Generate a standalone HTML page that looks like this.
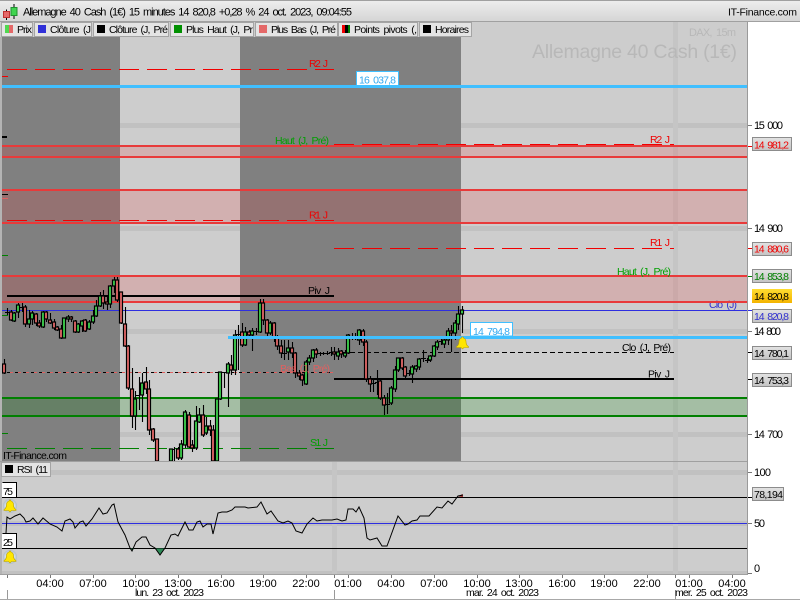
<!DOCTYPE html>
<html><head><meta charset="utf-8"><title>Allemagne 40 Cash</title>
<style>
html,body{margin:0;padding:0;background:#fff;width:800px;height:600px;overflow:hidden}
svg{display:block}
text{font-family:"Liberation Sans",sans-serif;font-size:10.5px;word-spacing:2px;fill:#000}
.m{text-anchor:middle;font-size:11px}
.g{fill:#3fd44f;stroke:#000;stroke-width:1.2}
.r{fill:#e46868;stroke:#000;stroke-width:1.2}
.w{fill:none;stroke:#000;stroke-width:1.1}
.tab{fill:#e4e4e4;stroke:#a4a4a4;stroke-width:1}
.box{fill:url(#lb);stroke:#8c8c8c;stroke-width:1}
</style></head><body>
<svg width="800" height="600" viewBox="0 0 800 600" xmlns="http://www.w3.org/2000/svg">
<defs>
<linearGradient id="tb" x1="0" y1="0" x2="0" y2="1"><stop offset="0" stop-color="#eeeeee"/><stop offset="1" stop-color="#d4d4d4"/></linearGradient>
<linearGradient id="lb" x1="0" y1="0" x2="0" y2="1"><stop offset="0" stop-color="#e2e2e2"/><stop offset="1" stop-color="#c4c4c4"/></linearGradient>
<linearGradient id="ye" x1="0" y1="0" x2="0" y2="1"><stop offset="0" stop-color="#ffdc30"/><stop offset="1" stop-color="#f4b400"/></linearGradient>
<radialGradient id="bl"><stop offset="0.5" stop-color="#e4ecf4"/><stop offset="1" stop-color="#aebcc8"/></radialGradient>
<clipPath id="cm"><rect x="2" y="37" width="746" height="424"/></clipPath>
<g id="bell"><path d="M-6 3.500 C-4 2.500 -3.500 0 -3.500 -1.500 C-3.500 -4 -1.500 -5 -.8 -5 L-.8 -6 L.8 -6 L.8 -5 C1.500 -5 3.500 -4 3.500 -1.500 C3.500 0 4 2.500 6 3.500 L6 4.500 L1.500 4.500 L0 6 L-1.500 4.500 L-6 4.500 Z" fill="#ffe600" stroke="#b8a000" stroke-width=".6"/></g>
</defs>

<!-- main backgrounds -->
<rect x="0" y="0" width="800" height="22" fill="url(#tb)"/>
<rect x="0" y="0" width="800" height="1" fill="#a0a0a0"/>
<rect x="0" y="21" width="800" height="1" fill="#a0a0a0"/>
<rect x="0" y="22" width="748" height="553" fill="#cdcdcd"/>
<rect x="0" y="22" width="2" height="553" fill="#b4b4b4"/>

<!-- grid bands -->
<g fill="#c1c1c1">
<rect x="2" y="123" width="746" height="5"/><rect x="2" y="226" width="746" height="5"/><rect x="2" y="329" width="746" height="5"/><rect x="2" y="432" width="746" height="5"/>
<rect x="2" y="470" width="746" height="5"/><rect x="2" y="521" width="746" height="5"/><rect x="2" y="571" width="746" height="3"/>
</g>
<g fill="#c5c5c5"><rect x="673" y="22" width="5" height="552"/><rect x="332" y="462" width="5" height="112"/></g>

<!-- watermark -->
<text x="689" y="36" style="font-size:11px;fill:#b8b8b8" textLength="47">DAX, 15m</text>
<text x="532" y="58" style="font-size:19.5px;fill:#b8b8b8;word-spacing:0" textLength="205">Allemagne 40 Cash (1€)</text>

<!-- dark sessions -->
<rect x="2" y="37" width="118" height="424" fill="#808080"/>
<rect x="240" y="37" width="221" height="424" fill="#808080"/>

<!-- labels under lines -->
<text x="709" y="308" style="fill:#3030d0" textLength="28">Clo (J)</text>

<!-- zones -->
<rect x="2" y="146" width="746" height="11" fill="#e83a3a" opacity=".2"/>
<rect x="2" y="190" width="746" height="33" fill="#e83a3a" opacity=".2"/>
<rect x="2" y="276" width="746" height="26" fill="#e83a3a" opacity=".2"/>
<rect x="2" y="398" width="746" height="18" fill="#008000" opacity=".2"/>
<g fill="#e83a3a">
<rect x="2" y="145" width="746" height="2"/><rect x="2" y="156" width="746" height="2"/><rect x="2" y="189" width="746" height="2"/><rect x="2" y="222" width="746" height="2"/><rect x="2" y="275" width="746" height="2"/><rect x="2" y="301" width="746" height="2"/>
</g>
<g fill="#008000"><rect x="2" y="397" width="746" height="2"/><rect x="2" y="415" width="746" height="2"/></g>
<rect x="2" y="310" width="746" height="1" fill="#2e2ee0"/>

<!-- dashed levels -->
<g fill="none" stroke-width="1">
<path d="M7 69.500H334M334 144.500H674M7 220.500H334M334 248.500H674" stroke="#f00000" stroke-dasharray="20 8"/>
<path d="M7 448.500H334" stroke="#008000" stroke-dasharray="20 8"/>
<path d="M7 372.500H334" stroke="#000" stroke-dasharray="3 5"/>
<path d="M10 372.500H334" stroke="#e06060" stroke-dasharray="3 5"/>
<path d="M334 352.500H674" stroke="#000" stroke-dasharray="5 3"/>
</g>
<rect x="7" y="295" width="327" height="2" fill="#000"/>
<rect x="334" y="378" width="340" height="2" fill="#000"/>

<!-- candles -->
<g clip-path="url(#cm)">
<path class="w" d="M4.500 359V374M7.500 308V315M11.500 310V321M14.500 312V322M18.500 303V318M22.500 303V312M25.500 305V327M29.500 310V328M32.500 311V325M36.500 313V326M39.500 320V328M43.500 311V328M46.500 311V322M50.500 313V324M54.500 319V330M57.500 326V331M61.500 325V339M64.500 318V338M68.500 315V322M71.500 316V322M75.500 320V333M78.500 323V333M82.500 320V332M85.500 319V332M89.500 320V330M93.500 310V324M96.500 300V317M100.500 292V307M103.500 290V309M107.500 296V310M110.500 285V308M114.500 277V293M117.500 277V302M121.500 292V324M125.500 307V347M128.500 345V390M132.500 368V428M135.500 391V430M139.500 377V410M142.500 373V422M146.500 367V394M149.500 380V435M153.500 428V442M157.500 439V461M171.500 449V461M174.500 447V461M178.500 447V460M181.500 440V460M185.500 410V448M189.500 412V448M192.500 440V452M196.500 406V450M199.500 408V423M203.500 405V437M206.500 417V435M210.500 420V436M213.500 425V461M217.500 399V461M220.500 372V400M224.500 372V388M228.500 362V407M231.500 355V375M235.500 330V375M238.500 325V370M242.500 323V347M245.500 327V346M249.500 330V338M252.500 328V351M256.500 328V335M260.500 299V333M263.500 299V325M267.500 319V338M270.500 321V335M274.500 322V342M277.500 335V350M281.500 340V358M284.500 340V360M288.500 340V360M292.500 342V358M295.500 352V378M299.500 370V380M302.500 372V386M306.500 360V385M309.500 355V365M313.500 349V362M316.500 348V358M320.500 352V356M323.500 352V355M327.500 351V355M331.500 347V356M334.500 347V360M338.500 348V360M341.500 350V358M345.500 350V358M348.500 334V354M352.500 333V340M355.500 333V340M359.500 329V345M363.500 329V346M366.500 340V382M370.500 376V392M373.500 380V392M377.500 370V395M380.500 378V400M384.500 395V415M387.500 393V414M391.500 386V405M395.500 366V392M398.500 358V372M402.500 357V370M405.500 366V378M409.500 370V376M412.500 365V383M416.500 365V372M419.500 358V370M423.500 350V362M427.500 358V363M430.500 355V362M434.500 345V357M437.500 340V350M441.500 336V345M444.500 338V348M448.500 328V345M451.500 325V352M455.500 320V340M458.500 306V330M462.500 306V333"/>
<path class="w" style="stroke-width:1" d="M5 312.500h5M20 307.500h5M135 395.500h5M170 449.500h5M222 372.500h5M236 334.500h5M254 331.500h5M282 353.500h5M318 353.500h5M321 353.500h5M325 353.500h5M329 352.500h5M350 336.500h5M353 336.500h5M371 383.500h5M375 382.500h5M385 404.500h5M407 373.500h5M421 358.500h5M425 360.500h5M439 341.500h5"/>
<path class="g" d="M12.500 313h3V321h-3zM16.500 305h3V312h-3zM27.500 319h3V324h-3zM30.500 313h3V319h-3zM41.500 312h3V327h-3zM62.500 318h3V338h-3zM66.500 317h3V319h-3zM76.500 324h3V332h-3zM80.500 321h3V326h-3zM87.500 322h3V329h-3zM91.500 316h3V322h-3zM94.500 306h3V316h-3zM98.500 296h3V306h-3zM108.500 286h3V304h-3zM112.500 280h3V286h-3zM133.500 399h3V416h-3zM140.500 383h3V395h-3zM169.500 449h3V461h-3zM179.500 444h3V458h-3zM183.500 412h3V445h-3zM194.500 421h3V448h-3zM197.500 415h3V422h-3zM204.500 426h3V433h-3zM215.500 399h3V461h-3zM218.500 372h3V399h-3zM226.500 364h3V373h-3zM233.500 335h3V370h-3zM243.500 332h3V345h-3zM250.500 331h3V335h-3zM258.500 303h3V332h-3zM268.500 323h3V333h-3zM286.500 348h3V352h-3zM304.500 362h3V384h-3zM307.500 358h3V362h-3zM311.500 350h3V358h-3zM336.500 352h3V356h-3zM343.500 353h3V356h-3zM346.500 335h3V353h-3zM357.500 330h3V340h-3zM389.500 388h3V403h-3zM393.500 370h3V389h-3zM396.500 358h3V370h-3zM410.500 367h3V374h-3zM414.500 366h3V369h-3zM417.500 359h3V367h-3zM428.500 356h3V360h-3zM432.500 346h3V356h-3zM435.500 342h3V347h-3zM442.500 340h3V344h-3zM446.500 331h3V340h-3zM453.500 323h3V333h-3zM456.500 314h3V324h-3zM460.500 310h3V314h-3z"/>
<path class="r" d="M2.500 364h3V373h-3zM9.500 312h3V320h-3zM23.500 307h3V324h-3zM34.500 314h3V323h-3zM37.500 323h3V326h-3zM44.500 312h3V319h-3zM48.500 320h3V323h-3zM52.500 322h3V328h-3zM55.500 327h3V330h-3zM59.500 329h3V338h-3zM69.500 317h3V319h-3zM73.500 321h3V332h-3zM83.500 320h3V331h-3zM101.500 296h3V303h-3zM105.500 302h3V304h-3zM115.500 280h3V300h-3zM119.500 292h3V323h-3zM123.500 324h3V346h-3zM126.500 346h3V388h-3zM130.500 389h3V416h-3zM144.500 382h3V389h-3zM147.500 389h3V430h-3zM151.500 429h3V440h-3zM155.500 439h3V461h-3zM176.500 449h3V458h-3zM187.500 415h3V447h-3zM190.500 445h3V448h-3zM201.500 415h3V435h-3zM208.500 426h3V430h-3zM211.500 430h3V461h-3zM229.500 365h3V370h-3zM240.500 332h3V345h-3zM247.500 332h3V335h-3zM261.500 303h3V320h-3zM265.500 320h3V333h-3zM272.500 323h3V338h-3zM275.500 338h3V346h-3zM279.500 346h3V353h-3zM290.500 348h3V353h-3zM293.500 353h3V373h-3zM297.500 373h3V376h-3zM300.500 375h3V380h-3zM314.500 350h3V354h-3zM332.500 352h3V354h-3zM339.500 351h3V354h-3zM361.500 331h3V342h-3zM364.500 342h3V379h-3zM368.500 379h3V384h-3zM378.500 381h3V398h-3zM382.500 398h3V405h-3zM400.500 358h3V368h-3zM403.500 367h3V376h-3zM449.500 331h3V333h-3z"/>
</g>

<!-- small price markers -->
<rect x="2" y="76" width="6" height="1" fill="#f00000"/>
<rect x="2" y="136" width="5" height="2" fill="#000"/>
<rect x="2" y="194" width="6" height="1" fill="#000"/>
<rect x="2" y="198" width="6" height="1" fill="#e06060"/>
<rect x="2" y="255" width="6" height="1" fill="#008000"/>
<rect x="2" y="315" width="6" height="1" fill="#008000"/>
<rect x="2" y="433" width="6" height="1" fill="#008000"/>

<!-- thick blue -->
<rect x="2" y="85" width="746" height="3" fill="#40bfff"/>
<rect x="228" y="336" width="520" height="3" fill="#40bfff"/>
<rect x="356.500" y="71.500" width="42" height="14" fill="#fff" stroke="#40bfff"/>
<text x="359" y="83.500" style="fill:#30a8f0" textLength="37">16 037,8</text>
<rect x="470.500" y="322.500" width="42" height="13.500" fill="#fff" stroke="#40bfff"/>
<text x="473" y="335" style="fill:#30a8f0" textLength="37">14 794,8</text>
<use href="#bell" x="462.500" y="343"/>

<!-- level labels -->
<text x="309" y="67" style="fill:#f00000" textLength="19">R2 J</text>
<text x="275" y="144" style="fill:#00a000" textLength="54">Haut (J, Pré)</text>
<text x="309" y="218.500" style="fill:#f00000" textLength="19">R1 J</text>
<text x="308" y="294" textLength="22">Piv J</text>
<text x="280" y="372" style="fill:#e06060" textLength="50">Bas (J, Pré)</text>
<text x="310" y="446" style="fill:#00a000" textLength="18">S1 J</text>
<text x="650" y="143" style="fill:#f00000" textLength="20">R2 J</text>
<text x="650" y="246" style="fill:#f00000" textLength="20">R1 J</text>
<text x="617" y="275" style="fill:#00a000" textLength="54">Haut (J, Pré)</text>
<text x="622" y="351" textLength="49">Clo (J, Pré)</text>
<text x="648" y="377.500" textLength="22">Piv J</text>

<text x="3" y="459" textLength="64">IT-Finance.com</text>

<!-- title -->
<path d="M6.500 9.500V20M14 4V19" stroke="#000" stroke-width="1" fill="none"/>
<rect x="3.500" y="11.500" width="6" height="6" fill="#e46868" stroke="#c03030"/>
<rect x="11" y="7.500" width="6" height="8" fill="#3fd44f" stroke="#209030"/>
<text x="23" y="15.500" textLength="329" style="font-size:11px">Allemagne 40 Cash (1€) 15 minutes 14 820,8 +0,28 % 24 oct. 2023, 09:04:55</text>
<text x="728" y="15.500" textLength="69">IT-Finance.com</text>

<!-- legend tabs -->
<rect x="0" y="22" width="472" height="15" fill="#cdcdcd"/>
<rect class="tab" x="1.500" y="22.500" width="31" height="14"/>
<rect class="tab" x="34.500" y="22.500" width="57" height="14"/>
<rect class="tab" x="93.500" y="22.500" width="75" height="14"/>
<rect class="tab" x="170.500" y="22.500" width="83" height="14"/>
<rect class="tab" x="255.500" y="22.500" width="82" height="14"/>
<rect class="tab" x="338.500" y="22.500" width="79" height="14"/>
<rect class="tab" x="419.500" y="22.500" width="52" height="14"/>
<rect x="5" y="25" width="4" height="8" fill="#50d850"/><rect x="9" y="25" width="4" height="8" fill="#e46868"/>
<rect x="38" y="25" width="8" height="8" fill="#3030d8"/>
<rect x="97" y="25" width="8" height="8" fill="#000"/>
<rect x="174" y="25" width="8" height="8" fill="#009000"/>
<rect x="259" y="25" width="8" height="8" fill="#e46868"/>
<rect x="342" y="25" width="3" height="8" fill="#f00000"/><rect x="345" y="25" width="3" height="8" fill="#000"/><rect x="348" y="25" width="2" height="8" fill="#008000"/>
<rect x="423" y="25" width="8" height="8" fill="#000"/>
<text x="17" y="33" textLength="15">Prix</text>
<text x="50" y="33" textLength="41">Clôture (J</text>
<text x="109" y="33" textLength="59">Clôture (J, Pré</text>
<text x="186" y="33" textLength="67">Plus Haut (J, Pr</text>
<text x="271" y="33" textLength="65">Plus Bas (J, Pré</text>
<text x="354" y="33" textLength="63">Points pivots (,</text>
<text x="435" y="33" textLength="34">Horaires</text>

<!-- panel separator -->
<rect x="0" y="461" width="748" height="1" fill="#a0a0a0"/>

<!-- RSI -->
<rect class="tab" x="1.500" y="462.500" width="49" height="14"/>
<rect x="5" y="465" width="8" height="8" fill="#000"/>
<text x="17" y="473" textLength="31">RSI (11</text>
<rect x="2" y="497" width="746" height="1" fill="#000"/>
<rect x="2" y="548" width="746" height="1" fill="#000"/>
<rect x="2" y="523" width="746" height="1" fill="#2e2ee0"/>
<path d="M155 548.500L160 555L165 548.500Z" fill="#2e8b57"/>
<path d="M130 548.500L132 551.500L134 548.500Z" fill="#2e8b57"/>
<path d="M458 496.500L462.500 494L463 497Z" fill="#a02020"/>
<polyline fill="none" stroke="#000" stroke-width="1" points="6,533 7,517 10,519 15,516 20,514 24,518 26,522 30,521 33,518 38,524 43,518 50,524 57,527 62,531 65,521 70,519 73,522 75,528 80,522 83,521 86,526 92,519 99,508 103,514 107,513 112,505 114,504 118,522 125,535 130,548 132,551 136,542 142,537 146,537 150,545 155,548 160,555 165,548 171,535 175,534 178,536 185,522 189,530 193,530 197,522 200,521 203,527 207,524 211,524 213,534 218,513 222,512 227,512 232,510 235,507 240,507 245,507 248,508 257,507 261,502 267,514 271,511 278,521 283,523 288,521 292,523 296,531 302,533 307,524 313,518 317,521 322,520 332,520 337,519 342,521 346,520 348,509 353,509 356,512 359,507 364,518 367,538 370,540 377,538 382,546 387,546 390,538 398,516 405,525 408,524 412,521 417,520 420,516 429,516 437,507 442,508 448,501 452,504 458,496 463,495"/>
<rect x="2" y="483" width="14" height="14" fill="#fff"/><path d="M2.500 482.500H16.500V497" fill="none" stroke="#000"/>
<rect x="2" y="534" width="14" height="14" fill="#fff"/><path d="M2.500 533.500H16.500V548" fill="none" stroke="#000"/>
<text x="3" y="495" textLength="10">75</text>
<text x="3" y="546" textLength="10">25</text>
<circle cx="10" cy="506" r="7" fill="url(#bl)"/><use href="#bell" x="10" y="506"/>
<circle cx="10" cy="557" r="7" fill="url(#bl)"/><use href="#bell" x="10" y="557"/>

<!-- right axis -->
<rect x="747" y="22" width="1" height="553" fill="#9a9a9a"/>
<rect x="748" y="22" width="52" height="553" fill="#fff"/>
<g fill="#000">
<rect x="748" y="125" width="4" height="1" fill="#777"/><rect x="748" y="228" width="4" height="1" fill="#777"/><rect x="748" y="331" width="4" height="1" fill="#777"/><rect x="748" y="434" width="4" height="1" fill="#777"/>
<rect x="748" y="472" width="4" height="1" fill="#777"/><rect x="748" y="523" width="4" height="1" fill="#777"/><rect x="748" y="573" width="4" height="1" fill="#777"/>
</g>
<text x="754" y="129" style="font-size:11px" textLength="29">15 000</text>
<text x="754" y="232" style="font-size:11px" textLength="29">14 900</text>
<text x="754" y="335" style="font-size:11px" textLength="27">14 800</text>
<text x="754" y="438" style="font-size:11px" textLength="29">14 700</text>
<text x="754" y="476" style="font-size:11px" textLength="17">100</text>
<text x="754" y="527" style="font-size:11px" textLength="11">50</text>
<text x="754" y="572" style="font-size:11px" textLength="6">0</text>
<g stroke-width="1" fill="none">
<path d="M748 146.500h4M748 248.500h4" stroke="#f00000"/><path d="M748 276.500h4" stroke="#008000"/><path d="M748 310.500h4" stroke="#2e2ee0"/><path d="M748 352.500h4M748 379.500h4M748 497.500h4" stroke="#000"/>
</g>
<rect class="box" x="752.500" y="137.500" width="39" height="13"/>
<rect class="box" x="752.500" y="242.500" width="39" height="13"/>
<rect class="box" x="752.500" y="269.500" width="39" height="13"/>
<rect x="752" y="289" width="40" height="14" fill="url(#ye)"/>
<rect class="box" x="752.500" y="309.500" width="39" height="13"/>
<rect class="box" x="752.500" y="346.500" width="39" height="13"/>
<rect class="box" x="752.500" y="373.500" width="39" height="13"/>
<rect class="box" x="752.500" y="487.500" width="31" height="13"/>
<text x="754" y="148.500" style="fill:#f00000" textLength="35">14 981,2</text>
<text x="754" y="252.500" style="fill:#f00000" textLength="35">14 880,6</text>
<text x="754" y="280" style="fill:#008000" textLength="35">14 853,8</text>
<text x="754" y="300" textLength="35">14 820,8</text>
<text x="754" y="320" style="fill:#3030d0" textLength="35">14 820,8</text>
<text x="754" y="357" textLength="35">14 780,1</text>
<text x="754" y="384" textLength="35">14 753,3</text>
<text x="754" y="498" textLength="29">78,194</text>

<!-- time axis -->
<rect x="0" y="574" width="748" height="1" fill="#a0a0a0"/>
<rect x="0" y="575" width="800" height="24" fill="#fff"/>
<rect x="0" y="599" width="800" height="1" fill="#a8a8a8"/>
<path d="M50.500 575v3M93.500 575v3M135.500 575v3M178.500 575v3M221.500 575v3M263.500 575v3M306.500 575v3M348.500 575v3M391.500 575v3M434.500 575v3M477.500 575v3M519.500 575v3M562.500 575v3M604.500 575v3M647.500 575v3M689.500 575v3M732.500 575v3M7.500 575v3M334.500 575v3M675.500 575v3" stroke="#777" fill="none"/>
<path d="M7.500 590v9M334.500 590v9M675.500 590v9" stroke="#999" fill="none"/>
<g>
<text class="m" x="50" y="587">04:00</text><text class="m" x="93" y="587">07:00</text><text class="m" x="136" y="587">10:00</text><text class="m" x="178" y="587">13:00</text><text class="m" x="221" y="587">16:00</text><text class="m" x="263" y="587">19:00</text><text class="m" x="306" y="587">22:00</text><text class="m" x="348" y="587">01:00</text><text class="m" x="391" y="587">04:00</text><text class="m" x="434" y="587">07:00</text><text class="m" x="477" y="587">10:00</text><text class="m" x="519" y="587">13:00</text><text class="m" x="562" y="587">16:00</text><text class="m" x="604" y="587">19:00</text><text class="m" x="647" y="587">22:00</text><text class="m" x="689" y="587">01:00</text><text class="m" x="732" y="587">04:00</text>
</g>
<text x="135" y="596" textLength="69">lun. 23 oct. 2023</text>
<text x="466" y="596" textLength="73">mar. 24 oct. 2023</text>
<text x="675" y="596" textLength="73">mer. 25 oct. 2023</text>
</svg>
</body></html>
